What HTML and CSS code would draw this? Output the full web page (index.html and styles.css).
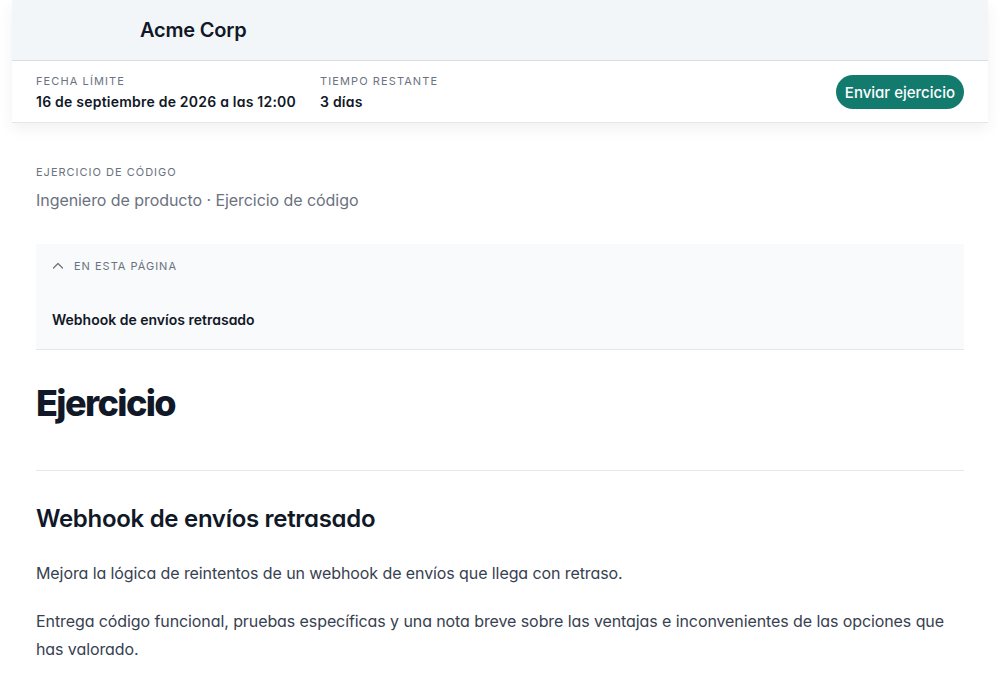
FILE: index.html
```html
<!DOCTYPE html>
<html lang="es">
<head>
<meta charset="utf-8">
<link rel="stylesheet" href="styles.css">
</head>
<body>
<div class="shell">
  <header class="brand">
    <div class="brand-name">Acme Corp</div>
  </header>
  <div class="meta">
    <div class="meta-items">
      <div class="meta-item">
        <div class="meta-label">Fecha límite</div>
        <div class="meta-value">16 de septiembre de 2026 a las 12:00</div>
      </div>
      <div class="meta-item">
        <div class="meta-label">Tiempo restante</div>
        <div class="meta-value">3 días</div>
      </div>
    </div>
    <button class="submit">Enviar ejercicio</button>
  </div>
</div>
<main class="content">
  <div class="eyebrow">Ejercicio de código</div>
  <div class="subtitle">Ingeniero de producto · Ejercicio de código</div>
  <nav class="toc">
    <div class="toc-head">
      <svg class="chev" width="12" height="12" viewBox="0 0 12 12"><path d="M1.5 8 L6 3.5 L10.5 8" fill="none" stroke="#6b7280" stroke-width="1.2" stroke-linecap="round" stroke-linejoin="round"/></svg>
      <span>En esta página</span>
    </div>
    <div class="toc-link">Webhook de envíos retrasado</div>
  </nav>
  <h1 class="title">Ejercicio</h1>
  <hr class="divider">
  <h2 class="section">Webhook de envíos retrasado</h2>
  <p class="para">Mejora la lógica de reintentos de un webhook de envíos que llega con retraso.</p>
  <p class="para">Entrega código funcional, pruebas específicas y una nota breve sobre las ventajas e inconvenientes de las opciones que has valorado.</p>
</main>
</body>
</html>
```
FILE: styles.css
```css
* { box-sizing: border-box; }
html, body { margin: 0; padding: 0; background: #fff; }
body {
  font-family: Inter, "Noto Sans", sans-serif;
  color: #111827;
  font-feature-settings: "cv11";
}
.shell {
  margin: 0 12px;
  box-shadow: 0 6px 14px rgba(15, 23, 42, 0.06);
}
.brand {
  background: #f3f6f8;
  height: 60px;
  display: flex;
  align-items: center;
  padding-left: 128px;
}
.brand-name {
  font-size: 20px;
  font-weight: 600;
  color: #111827;
  letter-spacing: -0.2px;
}
.meta {
  background: #fff;
  border-top: 1px solid #dadfe4;
  border-bottom: 1px solid #e5e7eb;
  height: 63px;
  display: flex;
  align-items: center;
  justify-content: space-between;
  padding: 0 24px;
}
.meta-items { display: flex; gap: 24px; }
.meta-label {
  font-size: 11px;
  letter-spacing: 1.1px;
  text-transform: uppercase;
  color: #6b7280;
  line-height: 16px;
  margin-top: 2px;
  margin-bottom: 3px;
}
.meta-value {
  font-size: 14px;
  font-weight: 600;
  color: #111827;
  line-height: 20px;
  letter-spacing: 0.22px;
}
.submit {
  font-family: inherit;
  font-feature-settings: "cv11";
  background: #137a6e;
  color: #fff;
  border: 0;
  border-radius: 999px;
  height: 34px;
  padding: 0 9px;
  font-size: 15px;
  font-weight: 500;
  margin-top: 1px;
}
.content { padding: 41px 36px 0; }
.eyebrow {
  font-size: 11px;
  letter-spacing: 1px;
  text-transform: uppercase;
  color: #6b7280;
  line-height: 16px;
}
.subtitle {
  font-size: 16px;
  color: #6b7280;
  line-height: 24px;
  margin-top: 8px;
  letter-spacing: -0.06px;
}
.toc {
  margin-top: 32px;
  background: #f8fafb;
  border-bottom: 1px solid #e5e7eb;
  padding: 14px 16px 19px;
}
.toc-head {
  display: flex;
  align-items: center;
  gap: 10px;
  font-size: 11px;
  letter-spacing: 1px;
  text-transform: uppercase;
  color: #6b7280;
  line-height: 16px;
}
.toc-link {
  margin-top: 36px;
  font-size: 14px;
  font-weight: 600;
  color: #111827;
  line-height: 20px;
}
.title {
  margin: 33px 0 0;
  font-size: 36px;
  font-weight: 800;
  letter-spacing: -1.6px;
  line-height: 40px;
  color: #111827;
}
.divider {
  border: 0;
  border-top: 1px solid #e5e7eb;
  margin: 47px 0 0;
}
.section {
  margin: 32px 0 0;
  font-size: 24px;
  font-weight: 600;
  letter-spacing: -0.3px;
  line-height: 32px;
  color: #111827;
}
.para {
  margin: 24px 0 0;
  font-size: 16px;
  line-height: 28px;
  color: #374151;
  letter-spacing: -0.09px;
}
.para + .para { margin-top: 20px; }
```
